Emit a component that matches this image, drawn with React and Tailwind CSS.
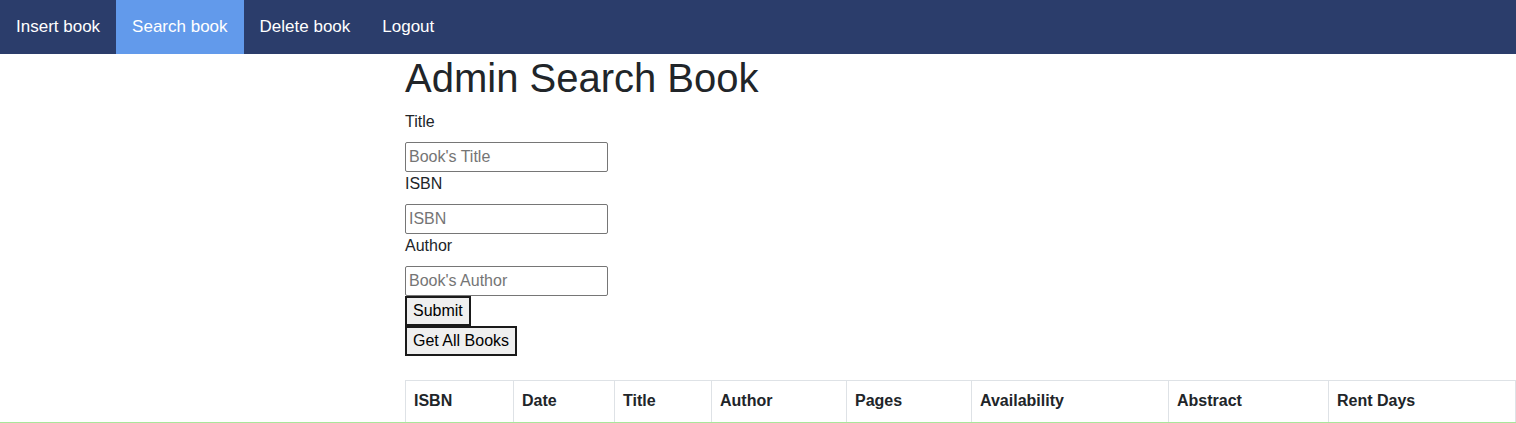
const navItems = ['Insert book', 'Search book', 'Delete book', 'Logout']
const columns = [
  ['ISBN', 108],
  ['Date', 101],
  ['Title', 97],
  ['Author', 135],
  ['Pages', 125],
  ['Availability', 197],
  ['Abstract', 160],
  ['Rent Days', 187],
]

const fields = [
  ['Title', "Book's Title"],
  ['ISBN', 'ISBN'],
  ['Author', "Book's Author"],
]

export default function App() {
  return (
    <div className="min-h-[423px] bg-white font-['Liberation_Sans',Arial,sans-serif] text-[16px] text-[#212529]">
      <nav className="flex h-[54px] bg-[#2b3d6b]">
        {navItems.map((item) => (
          <a
            key={item}
            href="#"
            className={`flex items-center px-4 text-[17px] text-white ${item === 'Search book' ? 'bg-[#629aeb]' : ''}`}
          >
            {item}
          </a>
        ))}
      </nav>

      <div className="ml-[405px] w-[1110px]">
        <h1 className="mb-2 text-[40px] leading-[48px] font-normal">Admin Search Book</h1>
        <form className="flex flex-col items-start">
          {fields.map(([label, placeholder]) => (
            <div key={label} className="flex flex-col items-start">
              <label className="mb-2 leading-6">{label}</label>
              <input
                placeholder={placeholder}
                className="h-[30px] w-[203px] rounded-[2px] border border-[#767676] px-[3px] text-[16px] text-black placeholder:text-[#757575] outline-none"
              />
            </div>
          ))}
          <button type="button" className="h-[30px] border-2 border-[#1a1a1a] bg-[#efefef] px-[6px] text-black">
            Submit
          </button>
          <button type="button" className="h-[30px] border-2 border-[#1a1a1a] bg-[#efefef] px-[6px] text-black">
            Get All Books
          </button>
        </form>

        <table className="mt-6 w-[1110px] table-fixed border-collapse">
          <thead>
            <tr>
              {columns.map(([name, w]) => (
                <th
                  key={name}
                  style={{ width: w }}
                  className="h-[41px] border border-b-0 border-[#dee2e6] px-2 text-left align-middle font-bold"
                >
                  {name}
                </th>
              ))}
            </tr>
          </thead>
        </table>
      </div>
      <div className="h-[2px] bg-[#a9e59b]" />
    </div>
  )
}
